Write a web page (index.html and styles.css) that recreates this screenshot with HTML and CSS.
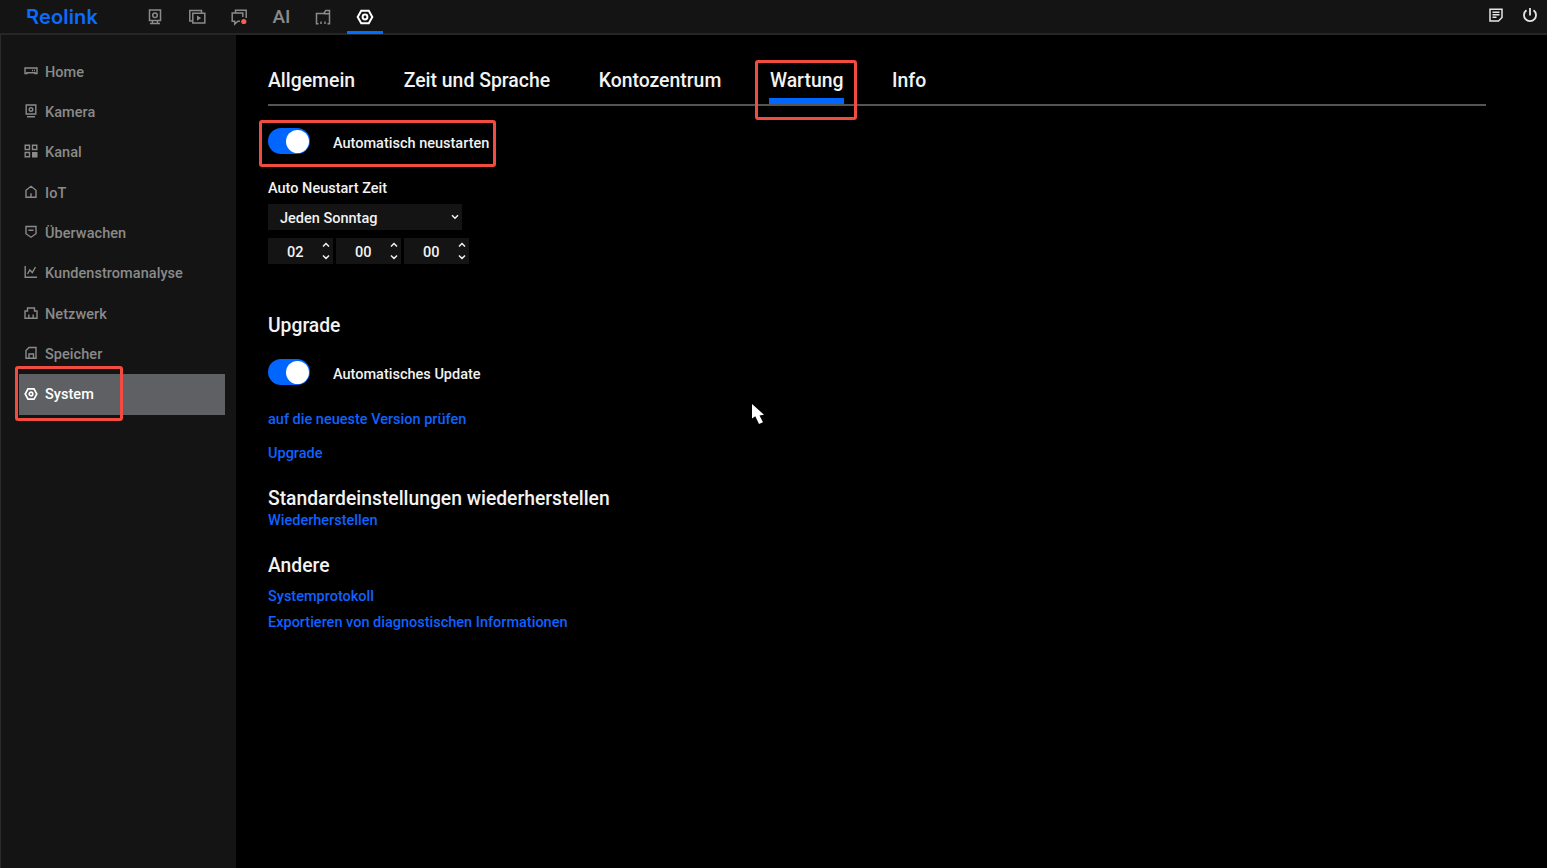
FILE: index.html
```
<!DOCTYPE html>
<html lang="de">
<head>
    <meta charset="UTF-8">
    <meta name="viewport" content="width=device-width, initial-scale=1.0">
    <title>Reolink - System</title>
    <link rel="stylesheet" href="styles.css">
</head>
<body>
    <header class="topbar">
        <div class="logo">Reolink</div>
        <nav class="topnav">
            <a class="top-item"><svg width="16" height="18" viewBox="0 0 16 18"><path d="M2.5 2h11v10.5h-11zM5.500 12.500v2.800M10.500 12.500v2.800M3 15.500h10"/><circle cx="8" cy="7.200" r="2.300"/></svg></a>
            <a class="top-item"><svg width="18" height="18" viewBox="0 0 18 18"><path d="M4.500 13H1.800V2.500h11.700v2.300M4.800 5.200h12v9.800h-12z"/><path class="solid" d="M9 7.500l4.200 2.600L9 12.700z"/></svg></a>
            <a class="top-item"><svg width="18" height="18" viewBox="0 0 18 18"><path d="M5.500 4.800V2.300h10.700V10M12.800 9V5H2.200v8.200h2.500v2.800l3.200-2.800H10"/><circle class="alert" cx="13.800" cy="13.500" r="2.600"/></svg></a>
            <a class="top-item ai">AI</a>
            <a class="top-item"><svg width="18" height="18" viewBox="0 0 18 18"><path d="M4.500 15.700H2.500V5.500h7.300l2-3h3.700v13.200h-2M9.800 5.800h5.700M7 13.500v2.500M11 13.500v2.500"/></svg></a>
            <a class="top-item active"><svg width="18" height="18" viewBox="0 0 18 18"><path d="M5.200 2.800h7.600L16.300 9l-3.500 6.200H5.200L1.700 9z"/><circle cx="9" cy="9" r="2.400"/></svg></a>
        </nav>
        <div class="top-actions">
            <svg width="16" height="16" viewBox="0 0 16 16"><path d="M2 2.200h12v8.300L10.500 14H2zM4.500 5.300h7M4.500 7.800h7M4.500 10.300h4"/></svg>
            <svg class="power" width="16" height="16" viewBox="0 0 16 16"><path d="M8 1v7.500M4.500 3.300a6 6 0 1 0 7 0"/></svg>
        </div>
    </header>

    <div class="layout">
        <aside class="sidebar">
            <a class="side-item"><svg width="14" height="14" viewBox="0 0 14 14"><path d="M1 4h12v5.500h-2V8.700H3v.8H1zM8 6.500h1M10 6.500h1"/></svg>Home</a>
            <a class="side-item"><svg width="14" height="14" viewBox="0 0 14 14"><path d="M2.200 1h9.600v9H2.200zM3 12.700h8"/><circle cx="7" cy="5.500" r="1.800"/></svg>Kamera</a>
            <a class="side-item"><svg width="14" height="14" viewBox="0 0 14 14"><path d="M1.200 1.200h4.300v4.300H1.200zM8.500 1.200h4.300v4.300H8.500zM1.200 8.500h4.300v4.300H1.200z"/><path class="solid" d="M8 8h5.500v5.500H8z"/></svg>Kanal</a>
            <a class="side-item"><svg width="14" height="14" viewBox="0 0 14 14"><path d="M2 5.300l5-4 5 4v7H2zM7 12V8.300"/></svg>IoT</a>
            <a class="side-item"><svg width="14" height="14" viewBox="0 0 14 14"><path d="M2 1.500h10v7.200l-5 3.500-5-3.500zM4.500 5.200h5"/></svg>Überwachen</a>
            <a class="side-item"><svg width="14" height="14" viewBox="0 0 14 14"><path d="M1.200 1v11.200H13M3.500 9l2.300-4 2.500 2.500L11.500 2"/></svg>Kundenstromanalyse</a>
            <a class="side-item"><svg width="14" height="14" viewBox="0 0 14 14"><path d="M1 12.200V5h2.500V2h7v3H13v7.200zM4.800 12V8.500M9.200 12V8.500"/></svg>Netzwerk</a>
            <a class="side-item"><svg width="14" height="14" viewBox="0 0 14 14"><path d="M2 12.200V4.500l3-3h7v10.700zM5 12V8h4.500v4"/></svg>Speicher</a>
            <a class="side-item active"><svg width="14" height="14" viewBox="0 0 14 14"><path d="M4 1.800h6L12.800 7 10 12.200H4L1.200 7z"/><circle cx="7" cy="7" r="1.800"/></svg>System<span class="marker marker-system"></span></a>
        </aside>

        <main class="content">
            <nav class="tabs">
                <a class="tab">Allgemein</a>
                <a class="tab">Zeit und Sprache</a>
                <a class="tab">Kontozentrum</a>
                <a class="tab active">Wartung<span class="marker marker-tab"></span></a>
                <a class="tab">Info</a>
            </nav>

            <div class="switch-row">
                <span class="switch"></span>
                <span class="switch-label">Automatisch neustarten</span>
                <span class="marker marker-restart"></span>
            </div>
            <div class="field-label">Auto Neustart Zeit</div>
            <div class="select">Jeden Sonntag<svg width="8" height="6" viewBox="0 0 8 6"><path d="M1 1.200l3 3 3-3"/></svg></div>
            <div class="time">
                <div class="spinner"><span>02</span><svg width="8" height="20" viewBox="0 0 8 20"><path d="M1 5.500l3-3 3 3M1 14.500l3 3 3-3"/></svg></div>
                <div class="spinner"><span>00</span><svg width="8" height="20" viewBox="0 0 8 20"><path d="M1 5.500l3-3 3 3M1 14.500l3 3 3-3"/></svg></div>
                <div class="spinner"><span>00</span><svg width="8" height="20" viewBox="0 0 8 20"><path d="M1 5.500l3-3 3 3M1 14.500l3 3 3-3"/></svg></div>
            </div>

            <section class="upgrade">
                <h2>Upgrade</h2>
                <div class="switch-row">
                    <span class="switch"></span>
                    <span class="switch-label">Automatisches Update</span>
                </div>
                <a class="link">auf die neueste Version prüfen</a>
                <a class="link">Upgrade</a>
            </section>

            <section class="restore">
                <h2>Standardeinstellungen wiederherstellen</h2>
                <a class="link">Wiederherstellen</a>
            </section>

            <section class="other">
                <h2>Andere</h2>
                <a class="link">Systemprotokoll</a>
                <a class="link">Exportieren von diagnostischen Informationen</a>
            </section>
        </main>
    </div>

    <svg class="cursor" width="14" height="22" viewBox="0 0 14 22"><path d="M1 1v14.500l3.300-2.200L8 21l4-1.800-3.500-6.700 4.500-.7z"/></svg>
</body>
</html>
```
FILE: styles.css
```
* {
    box-sizing: border-box;
}
body {
    margin: 0;
    height: 868px;
    overflow: hidden;
    background: #000;
    color: #f2f2f2;
    font-family: Roboto, sans-serif;
    font-size: 14.5px;
    font-weight: 500;
}
svg {
    display: block;
    flex: none;
    fill: none;
    stroke: currentColor;
    stroke-width: 1.5;
}
svg .solid {
    fill: currentColor;
    stroke: none;
}
.topbar {
    display: flex;
    align-items: center;
    height: 35px;
    padding: 0 9px 0 26px;
    background: #141414;
    border-bottom: 2px solid #262626;
}
.logo {
    position: relative;
    width: 111px;
    padding-top: 1px;
    color: #0a6cff;
    font-family: Inter, sans-serif;
    font-size: 20px;
    font-weight: 600;
    letter-spacing: 0.15px;
    line-height: 24px;
}
/* open lower left corner of the R */
.logo::before {
    content: "";
    position: absolute;
    left: 0;
    bottom: 3px;
    width: 5px;
    height: 8px;
    background: #141414;
}
.topnav {
    display: flex;
    gap: 6px;
    height: 34px;
}
.top-item {
    display: flex;
    align-items: center;
    justify-content: center;
    width: 36px;
    height: 34px;
    color: #8a8a8a;
}
.top-item.active {
    color: #fff;
    border-bottom: 3px solid #006eff;
    padding-top: 3px;
}
.top-item.active svg {
    stroke-width: 2;
}
.ai {
    padding-left: 1px;
    font-size: 19px;
}
.alert {
    fill: #ff5a4d;
    stroke: none;
}
.top-actions {
    display: flex;
    gap: 18px;
    margin: -3px 0 0 auto;
    color: #e6e6e6;
}
.power {
    stroke-width: 1.8;
}
.layout {
    display: flex;
    height: 833px;
}
.sidebar {
    width: 236px;
    padding: 16px 11px 0 18px;
    background: #141414;
    border-left: 1px solid #2b2b2b;
}
.side-item {
    position: relative;
    display: flex;
    align-items: center;
    gap: 7px;
    height: 40.35px;
    padding: 2px 0 0 5px;
    color: #8a8a8a;
    letter-spacing: 0.05px;
}
.side-item svg {
    margin-top: -3px;
    stroke-width: 1.4;
}
.side-item.active {
    height: 41px;
    padding-top: 1px;
    background: #5e6064;
    color: #fff;
}
.side-item.active svg {
    margin-top: -1px;
    stroke-width: 1.7;
}
.content {
    flex: 1;
    padding: 20px 61px 0 32px;
}
.tabs {
    display: flex;
    gap: 48.6px;
    height: 51px;
    border-bottom: 2px solid #555;
    font-size: 19.4px;
}
.tab {
    position: relative;
    height: 49px;
    line-height: 52px;
}
.tab.active::after {
    content: "";
    position: absolute;
    left: -1px;
    right: -1px;
    bottom: 0;
    height: 6px;
    background: #0066ff;
}
.switch-row {
    position: relative;
    display: flex;
    align-items: center;
    gap: 23px;
    height: 26px;
    margin-top: 22px;
}
.switch {
    width: 42px;
    height: 26px;
    padding: 2px;
    border-radius: 13px;
    background: #0066ff;
}
.switch::after {
    content: "";
    display: block;
    width: 23px;
    height: 23px;
    margin-left: 16px;
    border-radius: 50%;
    background: #fff;
}
.switch-label {
    padding-top: 4px;
}
.field-label {
    margin-top: 26px;
    line-height: 18px;
}
.select {
    display: flex;
    align-items: center;
    justify-content: space-between;
    width: 194px;
    height: 26px;
    margin-top: 6px;
    padding: 2px 3px 0 12px;
    background: #141414;
}
.select svg {
    margin-top: -3px;
}
.time {
    display: flex;
    gap: 3px;
    margin-top: 8px;
}
.spinner {
    display: flex;
    align-items: center;
    justify-content: space-between;
    width: 65px;
    height: 26px;
    padding: 2px 3px 0 19px;
    background: #141414;
}
.spinner svg {
    margin-top: -2px;
}
h2 {
    margin: 0;
    font-size: 19.3px;
    font-weight: 500;
    line-height: 24px;
}
.link {
    display: block;
    width: fit-content;
    color: #0f62ff;
    line-height: 18px;
}
.upgrade {
    margin-top: 50px;
}
.upgrade .switch-row {
    margin-top: 21px;
}
.upgrade .link {
    margin-top: 26px;
}
.upgrade .link + .link {
    margin-top: 16px;
}
.restore {
    margin-top: 24px;
}
.restore .link {
    margin-top: 1px;
}
.other {
    margin-top: 24px;
}
.other .link {
    margin-top: 10px;
}
.other .link + .link {
    margin-top: 8px;
}
.marker {
    position: absolute;
    z-index: 1;
    border: 3px solid #f24b3f;
    border-radius: 3px;
}
.marker-system {
    left: -4px;
    top: -8px;
    width: 108px;
    height: 55px;
}
.marker-tab {
    left: -15px;
    top: 5px;
    width: 102px;
    height: 60px;
}
.marker-restart {
    left: -9px;
    top: -8px;
    width: 237px;
    height: 47px;
}
.cursor {
    position: absolute;
    left: 751px;
    top: 403px;
    fill: #fff;
    stroke: none;
}
```
